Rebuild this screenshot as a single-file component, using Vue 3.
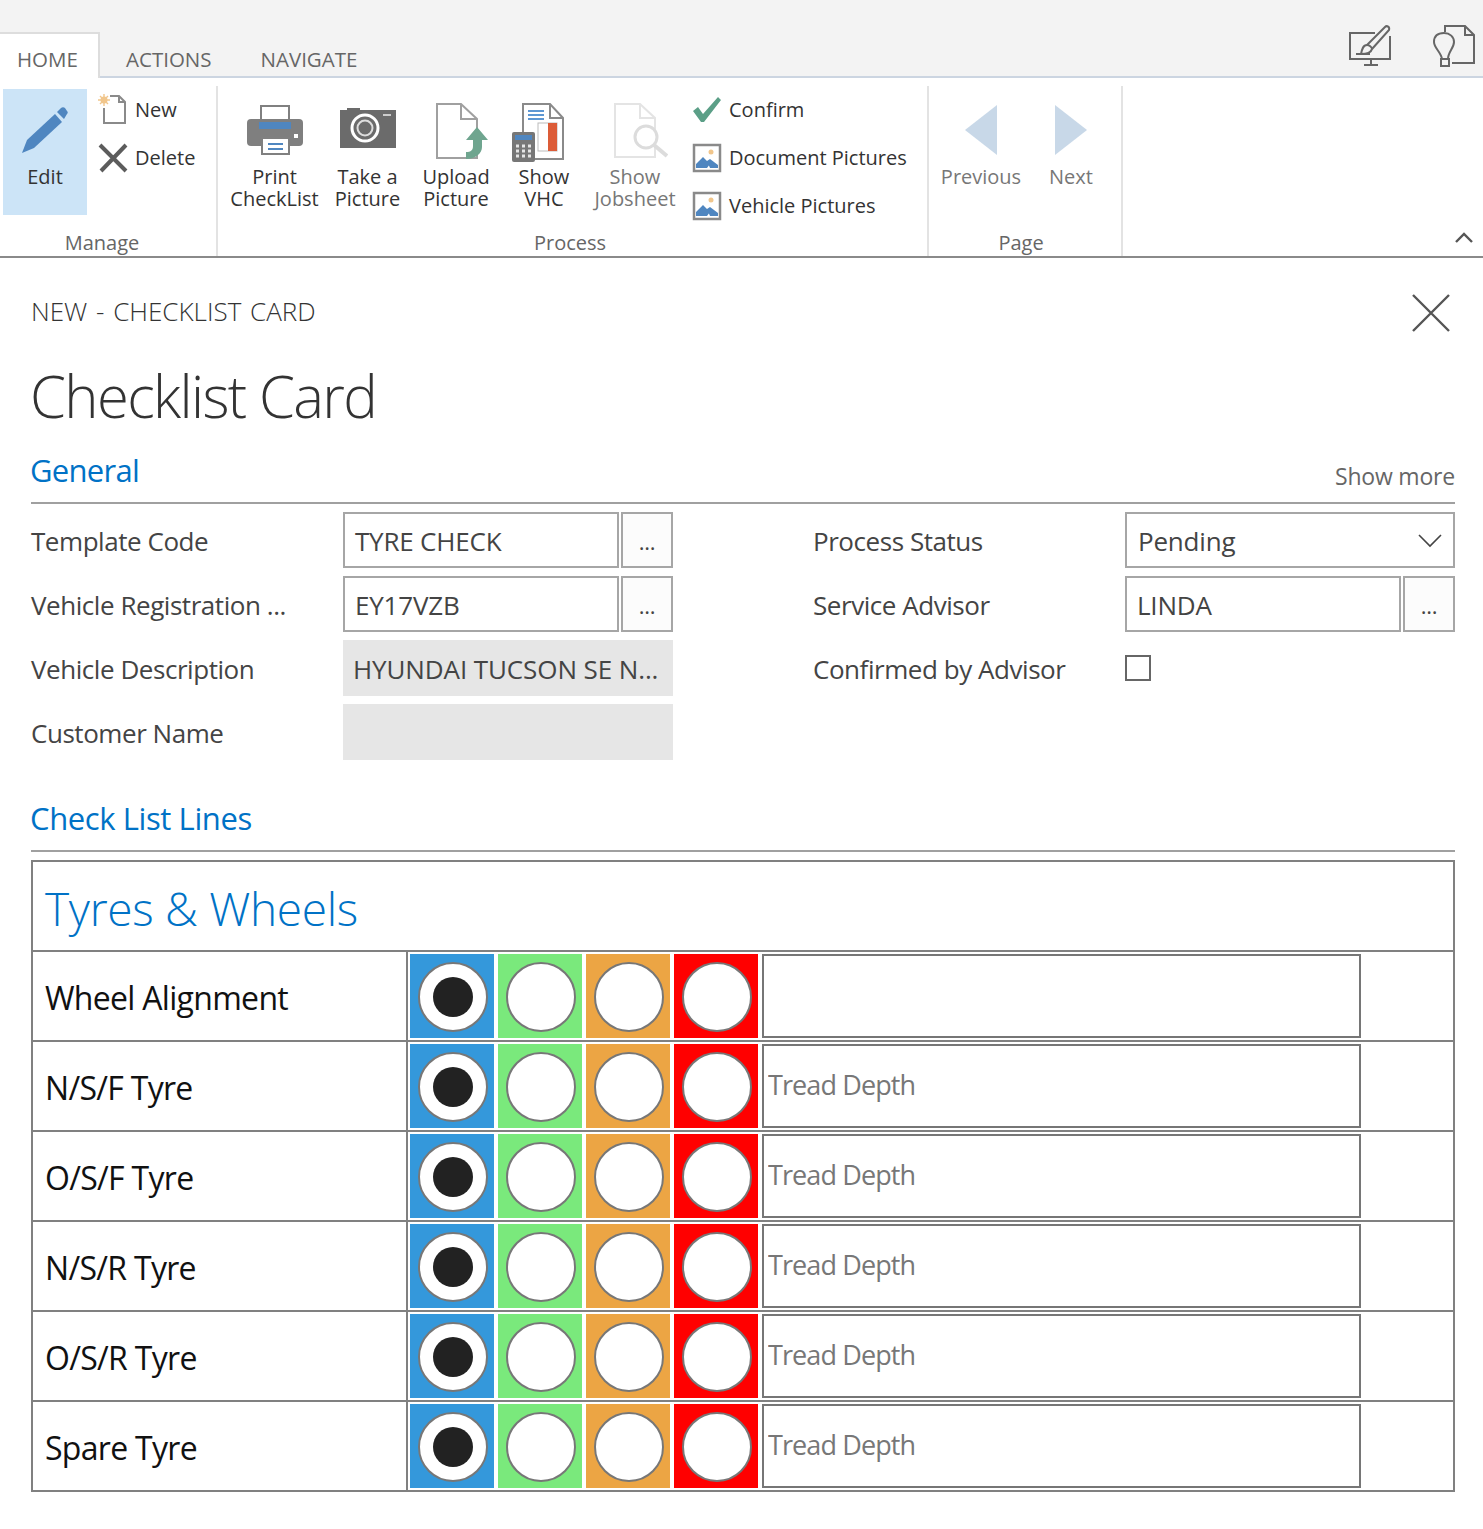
<script setup>
const lines = [
  { id: 1, name: 'Wheel Alignment', hint: '' },
  { id: 2, name: 'N/S/F Tyre', hint: 'Tread Depth' },
  { id: 3, name: 'O/S/F Tyre', hint: 'Tread Depth' },
  { id: 4, name: 'N/S/R Tyre', hint: 'Tread Depth' },
  { id: 5, name: 'O/S/R Tyre', hint: 'Tread Depth' },
  { id: 6, name: 'Spare Tyre', hint: 'Tread Depth' }
]

const colours = ['blue', 'green', 'orange', 'red']
</script>

<template>
  <div class="page">
    <div class="topbar">
      <div class="tab active">HOME</div>
      <div class="tab actions">ACTIONS</div>
      <div class="tab navigate">NAVIGATE</div>
      <div class="top-icons">
        <svg width="44" height="44" viewBox="0 0 44 44" fill="none" stroke="#666" stroke-width="2">
          <path d="M27 9H2V35H42V12" />
          <path d="M16 41H30M23 35V41" />
          <path d="M8 30H22" />
          <path d="M19 21L37 3C39 1 42 3 41 6L24 25" />
          <path d="M19 21C15 21 14 25 13 30C18 30 23 29 24 25C24 23 21 21 19 21Z" />
        </svg>
        <svg width="44" height="44" viewBox="0 0 44 44" fill="none" stroke="#666" stroke-width="2">
          <path d="M13 8V2H33L42 11V39H20" />
          <path d="M33 2V11H42" />
          <path d="M10 35C9 28 2 24 2 18C2 12 6 9 12 9C18 9 22 13 22 18C22 24 16 28 16 35Z" />
          <path d="M9 35H17V42H9Z" />
        </svg>
      </div>
    </div>

    <div class="ribbon">
      <div class="group manage">
        <div class="group-body">
          <div class="edit-btn">
            <svg width="48" height="48" viewBox="0 0 48 48">
              <path d="M1 46L6 33L34 7L41 15L13 41Z" fill="#4f86c0" />
              <path d="M36 5L40 1C41 0 43 0 44 1L46 4C47 5 47 6 46 7L43 12Z" fill="#4f86c0" />
            </svg>
            <span>Edit</span>
          </div>
          <div class="small-list">
            <div class="small-btn">
              <svg width="30" height="32" viewBox="0 0 30 32">
                <path d="M12 2H21L27 8V29H6V14" fill="#fff" stroke="#8a8a8a" stroke-width="2" />
                <path d="M21 2V8H27" fill="none" stroke="#8a8a8a" stroke-width="2" />
                <circle cx="6" cy="6" r="3.5" fill="#f1c68c" />
                <path d="M6 0V12M0 6H12M2 2L10 10M10 2L2 10" stroke="#f1c68c" stroke-width="1.4" />
              </svg>
              <span>New</span>
            </div>
            <div class="small-btn">
              <svg width="30" height="30" viewBox="0 0 30 30">
                <path d="M2 2L28 28M28 2L3 28" stroke="#5c5c5c" stroke-width="4" />
              </svg>
              <span>Delete</span>
            </div>
          </div>
        </div>
        <div class="group-label">Manage</div>
      </div>

      <div class="group process">
        <div class="group-body">
          <div class="big-btn w-print">
            <div class="big-icon">
              <svg class="top-5" width="56" height="50" viewBox="0 0 56 50">
                <rect x="14" y="1" width="28" height="18" fill="#fff" stroke="#808080" stroke-width="2" />
                <rect x="0" y="14" width="56" height="27" rx="4" fill="#7f7f7f" />
                <rect x="12" y="17" width="32" height="7" fill="#4f86c0" />
                <rect x="47" y="29" width="4" height="4" fill="#fff" />
                <rect x="15" y="33" width="27" height="16" fill="#fff" stroke="#808080" stroke-width="2" />
                <path d="M21 39H36M21 44H36" stroke="#4f86c0" stroke-width="2" />
              </svg>
            </div>
            <span>Print<br />CheckList</span>
          </div>
          <div class="big-btn w-picture">
            <div class="big-icon">
              <svg class="top-3" width="56" height="50" viewBox="0 0 56 50">
                <path d="M0 7H7V5H20V7H56V45H0Z" fill="#6b6b6b" />
                <circle cx="25" cy="25" r="13" fill="none" stroke="#fff" stroke-width="3" />
                <circle cx="25" cy="25" r="7.5" fill="none" stroke="#ddd" stroke-width="2" />
                <rect x="43" y="11" width="8" height="2" fill="#ccc" />
              </svg>
            </div>
            <span>Take a<br />Picture</span>
          </div>
          <div class="big-btn w-upload">
            <div class="big-icon">
              <svg class="top-3" width="64" height="58" viewBox="0 0 64 58">
                <path d="M13 1H37L53 16V55H13Z" fill="#fff" stroke="#a0a0a0" stroke-width="2" />
                <path d="M37 1V16H53" fill="none" stroke="#a0a0a0" stroke-width="2" />
                <path d="M53 24L64 37H58V44C58 50 52 56 42 56V49C47 49 49 47 49 43V37H42Z" fill="#6fa58f" />
              </svg>
            </div>
            <span>Upload<br />Picture</span>
          </div>
          <div class="big-btn w-vhc">
            <div class="big-icon">
              <svg class="top-3" width="64" height="60" viewBox="0 0 64 60">
                <path d="M11 1H38L51 15V56H11Z" fill="#fff" stroke="#8a8a8a" stroke-width="2" />
                <path d="M38 1V15H51" fill="none" stroke="#8a8a8a" stroke-width="2" />
                <path d="M16 8H32M16 12H32M16 16H32" stroke="#5d97d3" stroke-width="2" />
                <rect x="26" y="20" width="19" height="28" fill="#fff" stroke="#bbb" />
                <rect x="36" y="20" width="9" height="28" fill="#dc5c38" />
                <rect x="0" y="29" width="23" height="30" rx="2" fill="#777" />
                <rect x="3" y="32" width="17" height="5" fill="#4f86c0" />
                <path d="M4 43H7M10 43H13M16 43H19M4 48H7M10 48H13M16 48H19M4 53H7M10 53H13M16 53H19" stroke="#e5e5e5" stroke-width="3" />
              </svg>
            </div>
            <span>Show<br />VHC</span>
          </div>
          <div class="big-btn w-job disabled">
            <div class="big-icon">
              <svg class="top-3" width="66" height="58" viewBox="0 0 66 58">
                <path d="M13 1H38L53 15V54H13Z" fill="#fff" stroke="#e4e4e4" stroke-width="2" />
                <path d="M38 1V15H53" fill="none" stroke="#e4e4e4" stroke-width="2" />
                <circle cx="44" cy="34" r="11" fill="#fff" stroke="#dcdcdc" stroke-width="3" />
                <path d="M52 42L65 53" stroke="#dcdcdc" stroke-width="4" />
              </svg>
            </div>
            <span>Show<br />Jobsheet</span>
          </div>
          <div class="small-list proc-list">
            <div class="small-btn">
              <svg width="30" height="26" viewBox="0 0 30 26">
                <path d="M1 14L6 10L11 17L26 0L29 3L12 25H9Z" fill="#5b9f87" />
              </svg>
              <span>Confirm</span>
            </div>
            <div class="small-btn" v-for="label in ['Document Pictures', 'Vehicle Pictures']" :key="label">
              <svg width="30" height="30" viewBox="0 0 30 30">
                <rect x="2" y="2" width="26" height="26" fill="#fff" stroke="#8a8a8a" stroke-width="2.5" />
                <circle cx="19" cy="9" r="2.5" fill="#f1c68c" />
                <path d="M4 25V21L11 14L18 21L15 25ZM18 25L15 18L18 16L26 22V25Z" fill="#4f86c0" />
              </svg>
              <span>{{ label }}</span>
            </div>
          </div>
        </div>
        <div class="group-label">Process</div>
      </div>

      <div class="group pager">
        <div class="group-body">
          <div class="big-btn w-page disabled">
            <div class="big-icon">
              <svg class="top-4" width="34" height="52" viewBox="0 0 34 52"><path d="M33 1V51L1 26Z" fill="#c8d8e8" /></svg>
            </div>
            <span>Previous</span>
          </div>
          <div class="big-btn w-page disabled">
            <div class="big-icon">
              <svg class="top-4" width="34" height="52" viewBox="0 0 34 52"><path d="M1 1V51L33 26Z" fill="#c8d8e8" /></svg>
            </div>
            <span>Next</span>
          </div>
        </div>
        <div class="group-label">Page</div>
      </div>

      <svg class="collapse" width="20" height="13" viewBox="0 0 20 13" fill="none" stroke="#555" stroke-width="2.4">
        <path d="M2 11L10 3L18 11" />
      </svg>
    </div>

    <div class="content">
      <div class="head-row">
        <div class="breadcrumb">NEW - CHECKLIST CARD</div>
        <svg width="38" height="38" viewBox="0 0 38 38" stroke="#555" stroke-width="2.4">
          <path d="M1 1L37 37M37 1L1 37" />
        </svg>
      </div>
      <h1 class="page-title">Checklist Card</h1>

      <div class="section-head general">
        <span class="section-title">General</span>
        <span class="show-more">Show more</span>
      </div>

      <div class="form-grid">
        <div class="field">
          <label>Template Code</label>
          <div class="control">
            <div class="input">TYRE CHECK</div>
            <div class="dots">...</div>
          </div>
        </div>
        <div class="field">
          <label>Process Status</label>
          <div class="control">
            <div class="input select">
              <span>Pending</span>
              <svg width="24" height="14" viewBox="0 0 24 14" fill="none" stroke="#444" stroke-width="1.6">
                <path d="M1 1L12 12L23 1" />
              </svg>
            </div>
          </div>
        </div>
        <div class="field">
          <label>Vehicle Registration ...</label>
          <div class="control">
            <div class="input">EY17VZB</div>
            <div class="dots">...</div>
          </div>
        </div>
        <div class="field">
          <label>Service Advisor</label>
          <div class="control">
            <div class="input">LINDA</div>
            <div class="dots">...</div>
          </div>
        </div>
        <div class="field">
          <label>Vehicle Description</label>
          <div class="control">
            <div class="readonly">HYUNDAI TUCSON SE N...</div>
          </div>
        </div>
        <div class="field">
          <label>Confirmed by Advisor</label>
          <div class="control">
            <span class="checkbox"></span>
          </div>
        </div>
        <div class="field">
          <label>Customer Name</label>
          <div class="control">
            <div class="readonly"></div>
          </div>
        </div>
      </div>

      <div class="section-head lines-head">
        <span class="section-title">Check List Lines</span>
      </div>

      <div class="check-table">
        <div class="table-title">Tyres &amp; Wheels</div>
        <div class="check-row" v-for="line in lines" :key="line.id">
          <div class="check-name">{{ line.name }}</div>
          <div class="check-options">
            <div v-for="(colour, i) in colours" :key="colour" class="swatch" :class="colour">
              <span class="radio"><span v-if="i === 0" class="radio-dot"></span></span>
            </div>
            <input class="notes" type="text" :placeholder="line.hint" />
          </div>
        </div>
      </div>
    </div>
  </div>
</template>

<style>
body {
  background: #fff;
}
</style>

<style scoped>
.page {
  width: 1483px;
  height: 1529px;
  font-family: "Open Sans", "Noto Sans", sans-serif;
  color: #444;
  overflow: hidden;
}

/* top bar */
.topbar {
  height: 76px;
  background: #f3f3f3;
  border-bottom: 2px solid #ccd5e1;
  display: flex;
  align-items: flex-end;
}

.tab {
  font-size: 20.5px;
  color: #666;
  height: 46px;
  line-height: 54px;
  margin-bottom: -2px;
}

.tab.active {
  width: 100px;
  background: #fff;
  border-top: 2px solid #ddd;
  border-right: 2px solid #ddd;
  padding-left: 17px;
  box-sizing: border-box;
  line-height: 50px;
}

.tab.actions {
  margin-left: 26px;
}

.tab.navigate {
  margin-left: 49px;
}

.top-icons {
  margin-left: auto;
  display: flex;
  gap: 40px;
  padding-right: 7px;
  margin-bottom: 8px;
}

/* ribbon */
.ribbon {
  border-bottom: 2px solid #8a8a8a;
  padding-top: 8px;
  height: 170px;
  display: flex;
}

.group {
  display: flex;
  flex-direction: column;
  border-right: 2px solid #e3e3e3;
  box-sizing: border-box;
}

.group.manage {
  width: 218px;
  padding-left: 3px;
}

.group.process {
  width: 711px;
  padding-left: 10px;
}

.group.pager {
  width: 194px;
  padding-left: 7px;
}

.group-body {
  display: flex;
  flex: 1;
}

.group-label {
  text-align: center;
  font-size: 20px;
  line-height: 24px;
  padding: 0 15px 1px 0;
  color: #666;
}

.edit-btn {
  width: 84px;
  height: 126px;
  margin-top: 3px;
  background: #cce4f7;
  display: flex;
  flex-direction: column;
  align-items: center;
  font-size: 20px;
  color: #333;
  margin-right: 11px;
}

.edit-btn svg {
  margin-top: 18px;
  margin-bottom: 8px;
}

.small-list {
  display: flex;
  flex-direction: column;
}

.small-btn {
  height: 48px;
  display: flex;
  align-items: center;
  gap: 7px;
  font-size: 20px;
  line-height: 24px;
  color: #333;
}

.small-btn svg {
  flex: none;
  width: 30px;
}

.proc-list {
  margin-left: 12px;
}

.big-btn {
  display: flex;
  flex-direction: column;
  align-items: center;
  text-align: center;
  padding-top: 14px;
  font-size: 20px;
  line-height: 22px;
  color: #333;
}

.big-icon {
  height: 64px;
  margin-bottom: 2px;
  display: flex;
  align-items: flex-start;
  justify-content: center;
}

.top-3 { margin-top: 3px; }
.top-4 { margin-top: 4px; }
.top-5 { margin-top: 5px; }

.big-btn.disabled {
  color: #777;
}

.w-print { width: 93px; }
.w-picture { width: 93px; }
.w-upload { width: 84px; }
.w-vhc { width: 92px; }
.w-job { width: 90px; }
.w-page { width: 90px; }

.collapse {
  align-self: flex-end;
  margin-left: auto;
  margin-right: 9px;
  margin-bottom: 12px;
}

/* page content */
.content {
  padding: 0 28px 0 31px;
}

.head-row {
  margin-top: 36px;
  height: 38px;
  display: flex;
  align-items: center;
  justify-content: space-between;
  padding-right: 5px;
}

.breadcrumb {
  font-size: 26px;
  font-weight: 300;
  word-spacing: 2px;
  padding-bottom: 4px;
  color: #333;
}

.page-title {
  margin: 29px 0 1px -1px;
  font-size: 58px;
  font-weight: 300;
  letter-spacing: -1.65px;
  line-height: 70px;
  color: #333;
}

.section-head {
  display: flex;
  align-items: flex-end;
  justify-content: space-between;
  border-bottom: 2px solid #a0a0a0;
  box-sizing: border-box;
}

.section-head.general {
  height: 72px;
  padding-bottom: 10px;
}

.section-head.lines-head {
  height: 92px;
  padding-bottom: 10px;
}

.section-title {
  font-size: 31px;
  line-height: 40px;
  margin: 0 0 2px -1px;
  color: #0072c6;
  letter-spacing: -0.4px;
}

.general .section-title {
  letter-spacing: -0.7px;
}

.show-more {
  font-size: 23px;
  line-height: 30px;
  margin-bottom: 1px;
  color: #666;
  letter-spacing: -0.2px;
}

.form-grid {
  margin-top: 8px;
  display: grid;
  grid-template-columns: 642px 642px;
  column-gap: 140px;
  row-gap: 8px;
  grid-auto-rows: 56px;
}

.field {
  display: flex;
  align-items: center;
}

.field label {
  width: 312px;
  flex: none;
  padding-top: 2px;
  font-size: 26px;
  letter-spacing: -0.45px;
  color: #444;
}

.control {
  flex: 1;
  display: flex;
  align-items: center;
  gap: 2px;
  height: 56px;
  font-size: 26px;
  letter-spacing: -0.2px;
  color: #444;
}

.input {
  flex: 1;
  height: 56px;
  box-sizing: border-box;
  border: 2px solid #a6a6a6;
  padding: 0 10px;
  line-height: 54px;
}

.input.select {
  display: flex;
  align-items: center;
  justify-content: space-between;
  padding: 2px 11px 0;
}

.dots {
  width: 52px;
  height: 56px;
  box-sizing: border-box;
  border: 2px solid #a6a6a6;
  background: #fcfcfc;
  text-align: center;
  font-size: 22px;
  line-height: 54px;
}

.readonly {
  flex: 1;
  height: 56px;
  background: #e6e6e6;
  padding: 0 10px;
  letter-spacing: -0.1px;
  line-height: 58px;
  white-space: nowrap;
  overflow: hidden;
}

.checkbox {
  width: 26px;
  height: 26px;
  box-sizing: border-box;
  border: 2px solid #666;
}

/* check list table */
.check-table {
  margin-top: 8px;
  border: 2px solid #808080;
}

.table-title {
  height: 90px;
  box-sizing: border-box;
  border-bottom: 2px solid #808080;
  padding-left: 12px;
  font-size: 46px;
  font-weight: 300;
  line-height: 92px;
  letter-spacing: -0.3px;
  color: #0072c6;
}

.check-row {
  height: 90px;
  box-sizing: border-box;
  border-bottom: 2px solid #808080;
  display: flex;
}

.check-row:last-child {
  height: 88px;
  border-bottom: none;
}

.check-name {
  width: 375px;
  box-sizing: border-box;
  border-right: 2px solid #808080;
  padding-left: 12px;
  font-size: 32px;
  letter-spacing: -0.7px;
  line-height: 92px;
  color: #111;
}

.check-options {
  display: flex;
  gap: 4px;
  padding: 2px 0 2px 2px;
}

.swatch {
  width: 84px;
  height: 84px;
  display: flex;
  align-items: center;
  justify-content: center;
  padding: 2px 0 0 2px;
  box-sizing: border-box;
}

.blue { background: #3498db; }
.green { background: #7ae97c; }
.orange { background: #eca544; }
.red { background: #ff0000; }

.radio {
  width: 70px;
  height: 70px;
  box-sizing: border-box;
  border: 2px solid #777;
  border-radius: 50%;
  background: #fff;
  display: flex;
  align-items: center;
  justify-content: center;
}

.radio-dot {
  width: 40px;
  height: 40px;
  border-radius: 50%;
  background: #222;
}

.notes {
  width: 599px;
  height: 84px;
  box-sizing: border-box;
  border: 2px solid #767676;
  padding: 0 4px 4px;
  font-family: inherit;
  font-size: 27px;
  letter-spacing: -0.9px;
  outline: none;
}

.notes::placeholder {
  color: #777;
  opacity: 1;
}
</style>
